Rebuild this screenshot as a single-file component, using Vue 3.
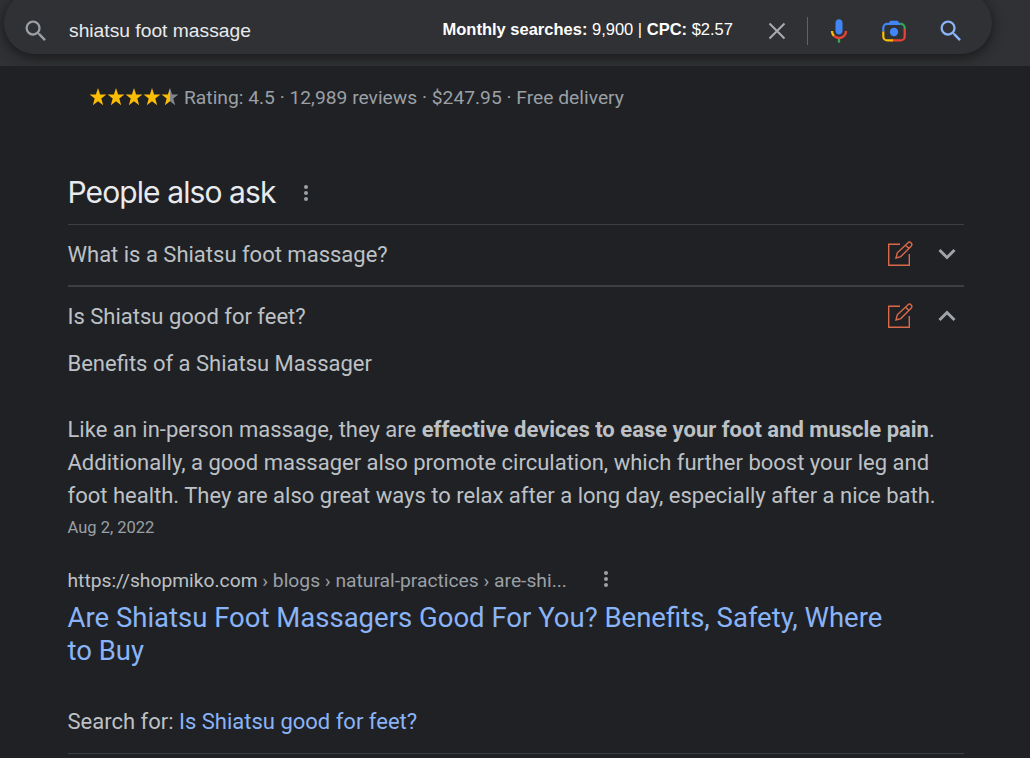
<template>
  <div class="page">
    <header class="topbar">
      <div class="searchbox">
        <svg class="icon-search" viewBox="0 0 24 24" fill="#9aa0a6">
          <path :d="searchPath" />
        </svg>
        <span class="query">{{ query }}</span>
        <span class="metrics">
          <b>Monthly searches:</b> 9,900 | <b>CPC:</b> $2.57
        </span>
        <svg class="icon-clear" viewBox="0 0 18 18" stroke="#a8abb0" stroke-width="2" fill="none">
          <path d="M1.5 1.5L16.5 16.5M16.5 1.5L1.5 16.5" />
        </svg>
        <span class="separator"></span>
        <svg class="icon-mic" viewBox="0 0 24 24">
          <path fill="#4285f4" d="M12 15c1.66 0 3-1.31 3-2.97V4.97C15 3.31 13.66 2 12 2S9 3.31 9 4.97v7.06C9 13.69 10.34 15 12 15z" />
          <path fill="#34a853" d="M11 18.08h2V22h-2z" />
          <path fill="#fbbc04" d="M7.05 16.87C5.78 15.6 5 13.9 5 12h2c0 1.45.56 2.42 1.47 3.38z" />
          <path fill="#ea4335" d="M12 16.93a4.97 5.25 0 0 1-3.54-1.55l-1.41 1.49A6.98 6.98 0 0 0 12 19c3.87 0 7-3.13 7-7h-2c0 2.92-2.24 4.93-5 4.93z" />
        </svg>
        <svg class="icon-lens" viewBox="0 0 24 22" fill="none" stroke-width="2.2">
          <path stroke="#4285f4" d="M1.3 11.5V7.8a4 4 0 0 1 4-4h13.2" />
          <path fill="#4285f4" d="M6 4.8L8.2.8h7.6L18 4.8z" />
          <path stroke="#34a853" d="M18.3 3.8h.4a4 4 0 0 1 4 4v1.5" />
          <path stroke="#ea4335" d="M22.7 9v7.4a4 4 0 0 1-4 4H10" />
          <path stroke="#fbbc04" d="M1.3 11.5v4.9a4 4 0 0 0 4 4H11" />
          <circle cx="12" cy="12" r="4.2" fill="#4285f4" />
        </svg>
        <svg class="icon-submit" viewBox="0 0 24 24" fill="#8ab4f8">
          <path :d="searchPath" />
        </svg>
      </div>
    </header>

    <main class="results">
      <div class="rating">
        <svg class="stars" viewBox="0 0 90 18">
          <defs>
            <linearGradient id="half">
              <stop offset="50%" stop-color="#fbbc04" />
              <stop offset="50%" stop-color="#80868b" />
            </linearGradient>
          </defs>
          <path
            v-for="n in 5"
            :key="n"
            :transform="`translate(${(n - 1) * 18} 0)`"
            :fill="n === 5 ? 'url(#half)' : '#fbbc04'"
            d="M9 0L11.1 6.4H17.4L12.3 10.5L14.2 17.2L9 13.2L3.8 17.2L5.7 10.5L.6 6.4H6.9z"
          />
        </svg>
        <span class="rating-text">Rating: 4.5 · 12,989 reviews · $247.95 · Free delivery</span>
      </div>

      <div class="heading">
        <h2>People also ask</h2>
        <span class="dots"><i></i><i></i><i></i></span>
      </div>

      <div v-for="item in questions" :key="item.text" class="question" :class="{ open: item.open }">
        <span class="question-text">{{ item.text }}</span>
        <svg class="icon-edit" viewBox="0 0 26 26" fill="none" stroke="#d9694a" stroke-width="1.4">
          <path d="M13 3.2H1.7v21h20.6V13" />
          <path d="M9 17l1.3-5.2L20.8 1.9a2.3 2.3 0 0 1 3.3 3.3L13.8 15.6zM18.5 4.1l3.3 3.3" />
        </svg>
        <svg class="icon-chevron" viewBox="0 0 18 12" fill="none" stroke="#a0a4a9" stroke-width="2.9">
          <path d="M1.5 2L9 9.5L16.5 2" />
        </svg>
      </div>

      <div class="answer">
        <p class="subtitle">Benefits of a Shiatsu Massager</p>
        <p class="body">
          Like an in-person massage, they are <b>effective devices to ease your foot and muscle pain</b>.<br />
          Additionally, a good massager also promote circulation, which further boost your leg and<br />
          foot health. They are also great ways to relax after a long day, especially after a nice bath.
        </p>
        <p class="date">Aug 2, 2022</p>

        <div class="source">
          <span class="url">https://shopmiko.com<em> › blogs › natural-practices › are-shi...</em></span>
          <span class="dots"><i></i><i></i><i></i></span>
        </div>
        <h3>Are Shiatsu Foot Massagers Good For You? Benefits, Safety, Where<br />to Buy</h3>
        <p class="search-for">Search for: <a>Is Shiatsu good for feet?</a></p>
      </div>
    </main>
  </div>
</template>

<script setup>
const query = 'shiatsu foot massage'

const questions = [
  { text: 'What is a Shiatsu foot massage?', open: false },
  { text: 'Is Shiatsu good for feet?', open: true }
]

const searchPath =
  'M15.5 14h-.79l-.28-.27A6.47 6.47 0 0 0 16 9.5 6.5 6.5 0 1 0 9.5 16c1.61 0 3.09-.59 4.23-1.57l.27.28v.79l5 4.99L20.49 19l-4.99-5zm-6 0C7.01 14 5 11.99 5 9.5S7.01 5 9.5 5 14 7.01 14 9.5 11.99 14 9.5 14z'
</script>

<style>
body {
  margin: 0;
  background: #202124;
}
</style>

<style scoped>
.page {
  width: 1030px;
  height: 758px;
  overflow: hidden;
  background: #202124;
  color: #bdc1c6;
  font-family: Roboto, "Liberation Sans", sans-serif;
}

svg {
  display: block;
  flex: none;
}

p,
h2,
h3 {
  margin: 0;
  font-weight: 400;
  white-space: nowrap;
}

.topbar {
  height: 66px;
  overflow: hidden;
  background: #303134;
}

.searchbox {
  display: flex;
  align-items: center;
  box-sizing: border-box;
  width: 988px;
  height: 62px;
  margin: -8px 0 0 4px;
  padding: 8px 0 0 18px;
  border-radius: 31px;
  background: #303134;
  box-shadow: 0 3px 11px 1px rgba(23, 23, 23, 0.85);
  font-family: "Liberation Sans", Arial, sans-serif;
}

.icon-search {
  width: 28px;
  height: 28px;
  margin-top: 7px;
}

.query {
  width: 374px;
  margin: 7px 0 0 19px;
  color: #e8eaed;
  font-size: 19.25px;
}

.metrics {
  width: 325.5px;
  margin: 5px 0 0 -0.5px;
  color: #fff;
  font-size: 16.5px;
  white-space: nowrap;
}

.icon-clear {
  width: 18px;
  height: 18px;
  margin-top: 8px;
}

.separator {
  width: 1px;
  height: 28px;
  margin: 8px 0 0 21px;
  background: #5f6368;
}

.icon-mic {
  width: 28px;
  height: 28px;
  margin: 7px 0 0 17px;
}

.icon-lens {
  width: 24px;
  height: 22px;
  margin: 7px 0 0 29px;
}

.icon-submit {
  width: 28px;
  height: 28px;
  margin: 7px 0 0 31px;
}

.results {
  width: 896px;
  margin-left: 67.5px;
}

.rating {
  display: flex;
  align-items: center;
  height: 24px;
  margin-top: 19px;
  padding-left: 21.5px;
  color: #9aa0a6;
  font-size: 19.25px;
}

.stars {
  width: 90px;
  height: 18px;
}

.rating-text {
  margin-left: 5px;
  white-space: nowrap;
}

.heading {
  display: flex;
  align-items: center;
  height: 62px;
  margin-top: 53px;
  border-bottom: 1px solid #3c4043;
}

h2 {
  width: 236px;
  padding-bottom: 2px;
  color: #e8eaed;
  font-family: Inter, sans-serif;
  font-size: 30px;
  letter-spacing: -0.9px;
}

.dots {
  display: flex;
  flex-direction: column;
  gap: 2px;
}

.dots i {
  width: 4px;
  height: 4px;
  border-radius: 50%;
  background: #9aa0a6;
}

.question {
  display: flex;
  align-items: center;
  box-sizing: border-box;
  height: 60px;
  padding-bottom: 2px;
  font-size: 22px;
}

.question.open {
  height: 62px;
  border-top: 2px solid #3c4043;
}

.question-text {
  flex: 1;
}

.icon-edit {
  width: 26px;
  height: 26px;
  margin-right: 25px;
}

.icon-chevron {
  width: 18px;
  height: 12px;
  margin-right: 7.5px;
}

.open .icon-chevron {
  transform: scaleY(-1);
}

.answer {
  height: 406px;
  border-bottom: 1px solid #3c4043;
  font-size: 22px;
}

.subtitle {
  line-height: 33px;
}

.body {
  margin-top: 33px;
  line-height: 33px;
}

.date {
  color: #9aa0a6;
  font-size: 16.5px;
  line-height: 32px;
}

.source {
  display: flex;
  align-items: center;
  height: 28px;
  margin-top: 22px;
  font-size: 19.25px;
}

.source em {
  color: #9aa0a6;
  font-style: normal;
}

.source .dots {
  margin: -3px 0 0 37.5px;
}

h3 {
  margin-top: 7px;
  color: #8ab4f8;
  font-size: 27.5px;
  line-height: 33px;
}

.search-for {
  margin-top: 38px;
  line-height: 33px;
}

.search-for a {
  color: #8ab4f8;
}
</style>
